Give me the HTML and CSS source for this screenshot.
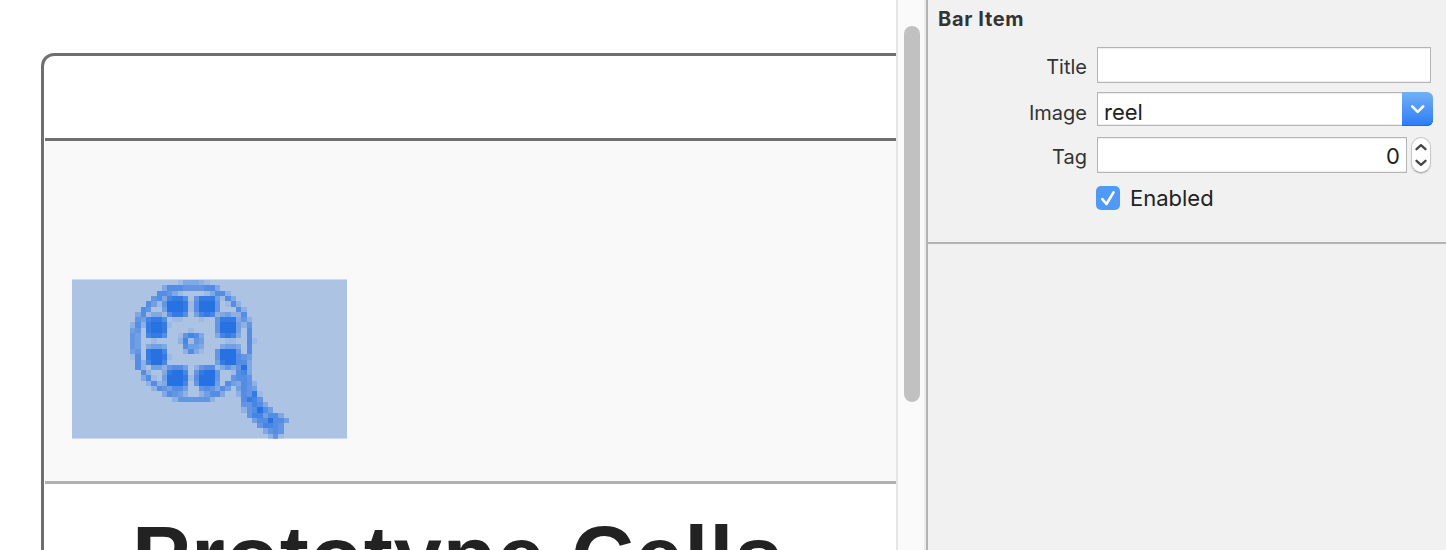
FILE: index.html
```
<!DOCTYPE html>
<html lang="en">
<head>
<meta charset="utf-8">
<title>Bar Item</title>
<link rel="stylesheet" href="styles.css">
</head>
<body>
<div class="app">
  <main class="canvas">
    <section class="device">
      <div class="status-bar"></div>
      <div class="nav-bar">
        <div class="selected-item"><svg class="reel" viewBox="0 0 30 30" shape-rendering="crispEdges"></svg></div>
      </div>
      <div class="table-head">Prototype Cells</div>
    </section>
  </main>
  <div class="scroll-track"><div class="thumb"></div></div>
  <aside class="inspector">
    <div class="bar-item">
      <h2>Bar Item</h2>
      <div class="row title-row"><label>Title</label><div class="field"></div></div>
      <div class="row image-row"><label>Image</label><div class="field combo"><span>reel</span></div><div class="drop"><svg width="31" height="34" viewBox="0 0 31 34"><path d="M10.2 14.3l5.5 5.5 5.5-5.5" fill="none" stroke="#fff" stroke-width="2.6" stroke-linecap="round" stroke-linejoin="round"/></svg></div></div>
      <div class="row tag-row"><label>Tag</label><div class="field number"><span>0</span></div><div class="stepper"><svg width="18" height="34" viewBox="0 0 18 34"><path d="M4.5 11.2L9 7.2l4.5 4M4.5 22.8L9 26.8l4.5-4" fill="none" stroke="#444" stroke-width="2.3" stroke-linecap="round" stroke-linejoin="round"/></svg></div></div>
      <div class="enabled-row"><span class="check"><svg width="24" height="24" viewBox="0 0 24 24"><path d="M6.3 13.2l4.2 4.8L17.5 6.3" fill="none" stroke="#fff" stroke-width="2.6" stroke-linecap="round" stroke-linejoin="round"/></svg></span><span class="enabled">Enabled</span></div>
    </div>
  </aside>
</div>
<script src="reel.js"></script>
</body>
</html>
```
FILE: styles.css
```
* { box-sizing: border-box; }
body { margin: 0; background: #fff; overflow: hidden; font-family: Inter, "Liberation Sans", sans-serif; color: #333; }
.app { display: flex; width: 1446px; height: 550px; overflow: hidden; }
.canvas { width: 896px; height: 550px; padding: 53px 0 0 41px; overflow: hidden; }
.device { height: 600px; border: 3px solid #6f6f6f; border-right: 0; border-bottom: 0; border-top-left-radius: 13px; }
.status-bar { height: 85px; margin-left: 1px; border-bottom: 3px solid #6f6f6f; }
.nav-bar { height: 343px; margin-left: 1px; padding: 138px 0 0 27px; background: #f9f9f9; border-bottom: 3px solid #b1b1b1; }
.selected-item { width: 275px; height: 160px; padding-left: 58px; background: #adc3e3; border: solid #cfdcef; border-width: 1px 0; }
.reel { display: block; width: 159px; height: 159px; }
.table-head { padding: 23px 0 0 88px; font: bold 87px/100px "Liberation Sans", Arial, sans-serif; letter-spacing: .9px; color: #222; white-space: nowrap; }
.scroll-track { width: 30px; height: 550px; padding: 26px 0 0 6px; background: #fafafa; border-left: 2px solid #e6e6e6; border-right: 2px solid #ececec; }
.thumb { width: 16px; height: 376px; border-radius: 8px; background: #c1c1c1; }
.inspector { width: 520px; height: 550px; background: #f1f1f1; border-left: 2px solid #b3b3b3; }
.bar-item { height: 244px; border-bottom: 2px solid #b3b3b3; }
h2 { margin: 0; height: 47px; padding: 5px 0 0 10px; font-size: 20px; line-height: 28px; font-weight: 700; letter-spacing: .65px; }
.row { display: flex; }
.row label { width: 159px; margin-right: 10px; text-align: right; font-size: 20px; line-height: 40px; }
.title-row { height: 45px; }
.image-row { height: 45px; }
.image-row label { line-height: 42px; }
.tag-row { height: 49px; }
.field { height: 36px; width: 334px; background: #fff; border: 1px solid #b5b5b5; box-shadow: inset 0 1px #eee, inset 0 -1px #eee; color: #222; font-size: 22px; line-height: 37px; }
.combo { width: 305px; height: 34px; padding-left: 6px; border-right: 0; line-height: 39px; }
.drop { width: 31px; height: 34px; border-radius: 0 6px 6px 0; background: linear-gradient(#73b0f5, #2b7cf5); box-shadow: inset 0 -1px #1d66e5; }
.number { width: 310px; padding-right: 6px; text-align: right; }
.stepper { width: 20px; height: 36px; margin-left: 4px; border: 1px solid #c8c8c8; border-bottom-color: #aaa; border-radius: 10px; background: #fff; box-shadow: 0 1px 1px #ccc; }
.stepper svg, .drop svg, .check svg { display: block; }
.enabled-row { display: flex; padding-left: 168px; color: #222; font-size: 22px; line-height: 24px; }
.check { width: 24px; height: 24px; margin-right: 10px; border-radius: 5px; background: #5099f6; }
```
FILE: reel.js
```
// Each digit is a pixel's opacity, from 0 (clear) to 9 (solid), in groups of five columns.
const rows = [
  "00000 00001 33321 00000 00000 00000",
  "00000 03666 55556 63000 00000 00000",
  "00000 66531 00001 36620 00000 00000",
  "00005 63788 60588 84163 00000 00000",
  "00064 15999 81699 95016 20000 00000",
  "00650 04999 81699 95000 62000 00000",
  "03613 31688 60478 72342 26000 00000",
  "05478 86011 00010 05888 35200 00000",
  "26289 98100 00000 05999 42500 00000",
  "45089 98000 01000 05999 40600 00000",
  "54078 86001 57630 03787 30600 00000",
  "54001 00002 71540 00011 00610 00000",
  "54034 43000 64430 00344 30600 00000",
  "45089 97000 26310 05999 50600 00000",
  "16089 98100 00000 05999 65400 00000",
  "06279 97000 00000 04899 66300 00000",
  "06204 42566 40256 61353 59300 00000",
  "00620 03899 70589 95001 67300 00000",
  "00361 04999 81699 95005 66500 00000",
  "00026 23999 70599 94064 36520 00000",
  "00002 65466 40056 53640 46540 00000",
  "00000 03654 20024 66300 26581 00000",
  "00000 00025 55555 20000 06875 00000",
  "00000 00000 00000 00000 05576 30000",
  "00000 00000 00000 00000 02569 64000",
  "00000 00000 00000 00000 00577 46630",
  "00000 00000 00000 00000 00046 69664",
  "00000 00000 00000 00000 00005 77650",
  "00000 00000 00000 00000 00000 35650",
  "00000 00000 00000 00000 00000 02510"
];
const reel = document.querySelector(".reel");
rows.forEach((row, y) => [...row.replaceAll(" ", "")].forEach((level, x) => {
  if (level === "0") return;
  const pixel = document.createElementNS("http://www.w3.org/2000/svg", "rect");
  pixel.setAttribute("x", x);
  pixel.setAttribute("y", y);
  pixel.setAttribute("width", 1);
  pixel.setAttribute("height", 1);
  pixel.setAttribute("fill", "#2772e3");
  pixel.setAttribute("fill-opacity", level / 9);
  reel.append(pixel);
}));
```
